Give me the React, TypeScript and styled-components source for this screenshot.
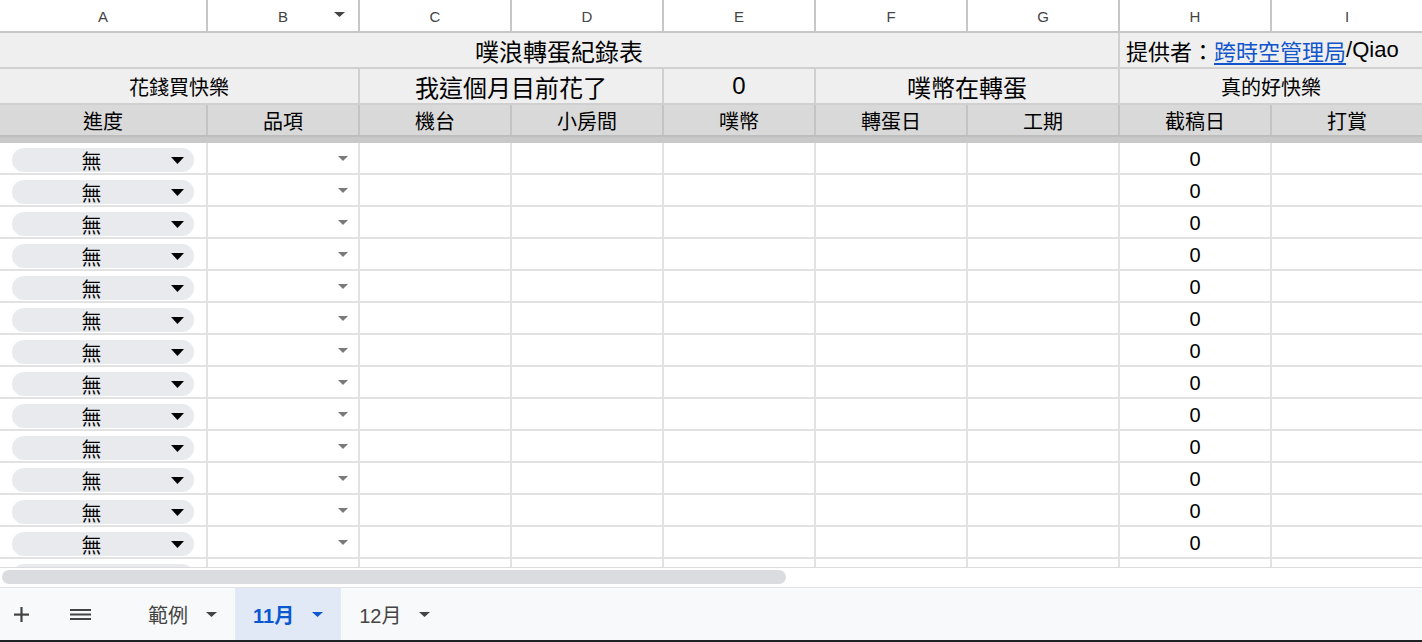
import React from 'react';
import styled, { createGlobalStyle } from 'styled-components';

const GlobalStyle = createGlobalStyle`
  html, body {
    margin: 0;
    padding: 0;
    background: #fff;
    overflow: hidden;
  }
  body {
    font-family: 'Liberation Sans', 'Noto Sans CJK TC', Arial, sans-serif;
    color: #000;
  }
  * {
    box-sizing: border-box;
  }
`;

const Page = styled.div`
  width: 1422px;
  height: 642px;
  display: flex;
  flex-direction: column;
  overflow: hidden;
`;

const Sheet = styled.div`
  flex: 0 0 567px;
  overflow: hidden;
  display: grid;
  grid-template-columns: 208px repeat(8, 152px);
  grid-auto-rows: min-content;
  align-content: start;
`;

const ColHead = styled.div`
  height: 33px;
  display: grid;
  grid-template-columns: 1fr auto 1fr;
  align-items: center;
  background: #fff;
  border-right: 2px solid #c7c7c7;
  border-bottom: 2px solid #c7c7c7;
  font-size: 15px;
  color: #444;
`;

const ColLetter = styled.span`
  grid-column: 2;
  padding-top: 1px;
`;

const ColFilter = styled.span`
  grid-column: 3;
  justify-self: end;
  margin-right: 13px;
  display: flex;
  margin-top: -3px;
`;

const BandCell = styled.div<{ $span: number; $size: number; $align?: 'left' | 'center' }>`
  grid-column: span ${(p) => p.$span};
  height: 36px;
  display: flex;
  align-items: center;
  justify-content: ${(p) => (p.$align === 'left' ? 'flex-start' : 'center')};
  padding: 0 6px;
  background: #efefef;
  border-right: 2px solid #d0d0d0;
  border-bottom: 2px solid #d0d0d0;
  font-size: ${(p) => p.$size}px;
  white-space: nowrap;
  overflow: hidden;
`;

const Link = styled.span`
  color: #1155cc;
  text-decoration: underline;
  text-underline-offset: 3px;
`;

const FieldHead = styled.div`
  height: 30px;
  display: flex;
  align-items: center;
  justify-content: center;
  background: #d9d9d9;
  border-right: 2px solid #c4c4c4;
  font-size: 20px;
`;

const FreezeBar = styled.div`
  grid-column: 1 / -1;
  height: 8px;
  background: #c8c8c8;
  border-top: 2px solid #bdbdbd;
`;

const DataCell = styled.div<{ $center?: boolean }>`
  height: 32px;
  display: flex;
  align-items: center;
  justify-content: ${(p) => (p.$center ? 'center' : 'flex-end')};
  background: #fff;
  border-right: 2px solid #e2e2e2;
  border-bottom: 2px solid #e2e2e2;
  font-size: 20px;
  padding: ${(p) => (p.$center ? '3px 0 0 0' : '0 10px 0 0')};
`;

const ChipCell = styled.div`
  height: 32px;
  display: flex;
  align-items: flex-start;
  padding: 5px 12px 0 12px;
  border-right: 2px solid #e2e2e2;
  border-bottom: 2px solid #e2e2e2;
`;

const Chip = styled.div`
  flex: 1;
  height: 24px;
  border-radius: 12px;
  background: #e8eaed;
  display: flex;
  align-items: center;
  padding-right: 10px;
  font-size: 20px;
`;

const ChipLabel = styled.span`
  flex: 1;
  text-align: center;
  padding-top: 1px;
`;

const ScrollArea = styled.div`
  flex: 0 0 20px;
  border-top: 1px solid #dcdcdc;
  padding: 2px 0 0 2px;
`;

const Thumb = styled.div`
  width: 784px;
  height: 14px;
  border-radius: 7px;
  background: #dadce0;
`;

const TabBar = styled.div`
  flex: 1;
  display: flex;
  align-items: stretch;
  background: #f8f9fa;
  border-top: 1px solid #e3e3e3;
  border-bottom: 2px solid #202124;
`;

const IconButton = styled.div<{ $width: number; $gap?: number }>`
  width: ${(p) => p.$width}px;
  margin-left: ${(p) => p.$gap ?? 0}px;
  display: flex;
  align-items: center;
  justify-content: center;
`;

const Tabs = styled.div`
  display: flex;
  margin-left: 27px;
`;

const Tab = styled.div<{ $active?: boolean }>`
  display: flex;
  align-items: center;
  gap: 18px;
  padding: 1px 18px 0 18px;
  background: ${(p) => (p.$active ? '#e1e9f7' : 'transparent')};
  color: ${(p) => (p.$active ? '#0b57d0' : '#444')};
  font-weight: ${(p) => (p.$active ? 700 : 400)};
  font-size: 20px;
`;

const Caret = ({ w, h, color }: { w: number; h: number; color: string }) => (
  <svg width={w} height={h} viewBox={`0 0 ${w} ${h}`}>
    <polygon points={`0,0 ${w},0 ${w / 2},${h}`} fill={color} />
  </svg>
);

const columns = ['A', 'B', 'C', 'D', 'E', 'F', 'G', 'H', 'I'];
const fields = ['進度', '品項', '機台', '小房間', '噗幣', '轉蛋日', '工期', '截稿日', '打賞'];
const rows = Array.from({ length: 14 }, (_, i) => i);
const sheets = [
  { name: '範例', active: false },
  { name: '11月', active: true },
  { name: '12月', active: false },
];

const App = () => {
  return (
    <Page>
      <GlobalStyle />
      <Sheet>
        {columns.map((c) => (
          <ColHead key={c}>
            <ColLetter>{c}</ColLetter>
            {c === 'B' && (
              <ColFilter>
                <Caret w={11} h={5} color='#444' />
              </ColFilter>
            )}
          </ColHead>
        ))}

        <BandCell $span={7} $size={24}>噗浪轉蛋紀錄表</BandCell>
        <BandCell $span={2} $size={22} $align='left'>
          提供者：<Link>跨時空管理局</Link>/Qiao
        </BandCell>

        <BandCell $span={2} $size={20}>花錢買快樂</BandCell>
        <BandCell $span={2} $size={24}>我這個月目前花了</BandCell>
        <BandCell $span={1} $size={24}>0</BandCell>
        <BandCell $span={2} $size={24}>噗幣在轉蛋</BandCell>
        <BandCell $span={2} $size={20}>真的好快樂</BandCell>

        {fields.map((f) => (
          <FieldHead key={f}>{f}</FieldHead>
        ))}
        <FreezeBar />

        {rows.map((r) => (
          <React.Fragment key={r}>
            <ChipCell>
              <Chip>
                <ChipLabel>無</ChipLabel>
                <Caret w={13} h={7} color='#000' />
              </Chip>
            </ChipCell>
            <DataCell>
              <Caret w={10} h={5} color='#7a7a7a' />
            </DataCell>
            <DataCell />
            <DataCell />
            <DataCell />
            <DataCell />
            <DataCell />
            <DataCell $center>0</DataCell>
            <DataCell />
          </React.Fragment>
        ))}
      </Sheet>

      <ScrollArea>
        <Thumb />
      </ScrollArea>

      <TabBar>
        <IconButton $width={43}>
          <svg width='15' height='15' viewBox='0 0 15 15'>
            <rect x='0' y='6.5' width='15' height='2.2' fill='#444' />
            <rect x='6.4' y='0' width='2.2' height='15' fill='#444' />
          </svg>
        </IconButton>
        <IconButton $width={45} $gap={15}>
          <svg width='21' height='11' viewBox='0 0 21 11'>
            <rect x='0' y='0' width='21' height='2' fill='#444' />
            <rect x='0' y='4.5' width='21' height='2' fill='#444' />
            <rect x='0' y='9' width='21' height='2' fill='#444' />
          </svg>
        </IconButton>
        <Tabs>
          {sheets.map((s) => (
            <Tab key={s.name} $active={s.active}>
              <span>{s.name}</span>
              <Caret w={11} h={5} color={s.active ? '#0b57d0' : '#444'} />
            </Tab>
          ))}
        </Tabs>
      </TabBar>
    </Page>
  );
};

export default App;
